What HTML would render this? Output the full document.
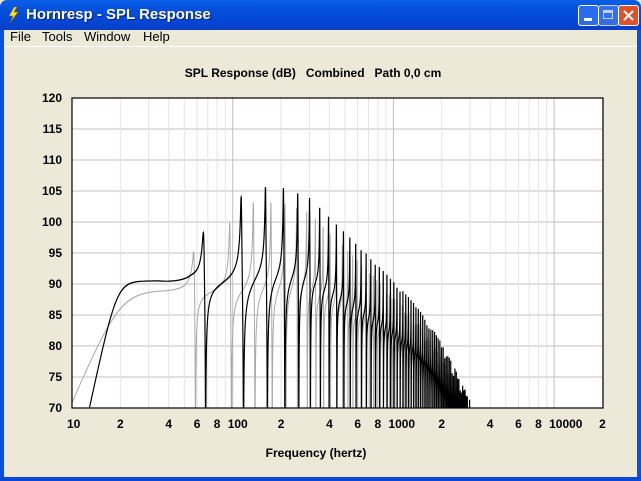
<!DOCTYPE html>
<html><head><meta charset="utf-8"><style>
html,body{margin:0;padding:0;width:641px;height:481px;overflow:hidden;background:#ece9d8;font-family:"Liberation Sans",sans-serif}
#tb{position:absolute;left:0;top:0;width:641px;height:30px;background:linear-gradient(#0a5fe8,#0550dc 30%,#0346d6 70%,#0a3fc4);border-radius:7px 7px 0 0}
#tt{position:absolute;left:26px;top:6px;color:#fff;font-weight:bold;font-size:15px;text-shadow:1px 1px #0a1e7a}
#menu{position:absolute;left:4px;top:30px;width:633px;height:17px;font-size:13px;color:#000}
#menu span{position:absolute;top:-1px}
#lb{position:absolute;left:0;top:30px;width:4px;height:451px;background:#0850e0}
#rb{position:absolute;right:0;top:30px;width:4px;height:451px;background:#0850e0}
#bb{position:absolute;left:0;top:477px;width:641px;height:4px;background:#0847d8}
.btn{position:absolute;top:5px;width:21px;height:21px;border:1px solid #fff;border-radius:3px;box-sizing:border-box}
</style></head><body>
<div id="tb">
<svg style="position:absolute;left:6px;top:6px" width="14" height="18"><path d="M8 1 L3 10 L7 10 L4 17 L12 6 L8 6 L11 1Z" fill="#f5e02a" stroke="#8a6a00" stroke-width="0.6"/></svg>
<div id="tt">Hornresp - SPL Response</div>
<div class="btn" style="left:578px;background:#2a6cf0"><div style="position:absolute;left:5px;top:12px;width:8px;height:3px;background:#fff"></div></div>
<div class="btn" style="left:598px;background:#4a7ae8;opacity:.75"><div style="position:absolute;left:4px;top:4px;width:10px;height:9px;border:1px solid #fff;border-top-width:3px;box-sizing:border-box"></div></div>
<div class="btn" style="left:618px;background:#e0502a"><svg width="19" height="19" style="position:absolute;left:0;top:0"><path d="M5 5 L14 14 M14 5 L5 14" stroke="#fff" stroke-width="2"/></svg></div>
</div>
<div id="lb"></div><div id="rb"></div><div id="bb"></div>
<div id="menu"><span style="left:6px">File</span><span style="left:38px">Tools</span><span style="left:80px">Window</span><span style="left:139px">Help</span></div>
<div style="position:absolute;left:4px;top:46px;width:633px;height:1px;background:#fff"></div>
<svg id="plot" width="641" height="481" style="position:absolute;left:0;top:0" font-family="Liberation Sans, sans-serif">
<defs><clipPath id="cp"><rect x="72" y="98" width="531" height="310"/></clipPath></defs>
<rect x="72" y="98" width="531" height="310" fill="#fff"/>
<g id="grid"></g>
<g clip-path="url(#cp)"><path id="gray" fill="none" stroke="#a8a8a8" stroke-width="1"/><path id="blk" fill="none" stroke="#000" stroke-width="1.2"/></g>
<rect x="72" y="98" width="531" height="310" fill="none" stroke="#000" stroke-width="1.2"/>
<g id="lab" font-size="12" font-weight="bold" fill="#000"></g>
<text x="313" y="77" font-size="12" font-weight="bold" text-anchor="middle" xml:space="preserve">SPL Response (dB)   Combined   Path 0,0 cm</text>
<text x="316" y="457" font-size="12" font-weight="bold" text-anchor="middle">Frequency (hertz)</text>
</svg>
<script>
var X0=72,D=160.7;
function fx(f){return X0+D*Math.log10(f/10);}
function dy(v){return 408-(v-70)*6.2;}
var g=document.getElementById('grid'),lab=document.getElementById('lab'),s='';
for(var v=75;v<120;v+=5)s+='<line x1="72" x2="603" y1="'+dy(v)+'" y2="'+dy(v)+'" stroke="#c0c0c0"/>';
var ls='';
for(var v=70;v<=120;v+=5)ls+='<text x="62" y="'+(dy(v)+4)+'" text-anchor="end">'+v+'</text>';
[10,100,1000,10000].forEach(function(d){for(var m=1;m<10;m++){var f=d*m;var x=fx(f);if(x>604)break;
 if(m>1||d>10)s+='<line x1="'+x+'" x2="'+x+'" y1="98" y2="408" stroke="'+(m==1?'#c0c0c0':'#e4e4e4')+'"/>';
 if(m==1)ls+='<text x="'+(x-5)+'" y="428">'+d+'</text>';
 else if(m%2==0)ls+='<text x="'+x+'" y="428" text-anchor="middle">'+m+'</text>';}});
g.innerHTML=s;lab.innerHTML=ls;
function lg(f){return Math.log10(f);}
function mid(f,plat){var v=plat;if(f>=300)v=plat-16*(lg(f)-lg(300));var q=Math.pow(f/1800,4);return v-10*lg(1+q);}
function ydb(f){if(f<60)return 6;if(f<130)return 6+9*(lg(f)-lg(60))/(lg(130)-lg(60));if(f<200)return 15;if(f<1000)return 15-7*(lg(f)-lg(200))/(lg(1000)-lg(200));return 8-3*(lg(f)-lg(1000))/(lg(3000)-lg(1000));}
function curve(order,fc,plat,p,off,R,yadj){var pts=[];
 for(var x=72;x<=603;x+=0.05){var f=10*Math.pow(10,(x-X0)/D);var r=Math.pow(f/fc,2*order);
  var base=mid(f,plat)+10*Math.log10(r/(1+r));
  var th=2*Math.PI*(f-off)/p;
  var ar=1-R*Math.cos(th),ai=-R*Math.sin(th),den=ar*ar+ai*ai;
  var tr=ar/den-1/(1+R),ti=-ai/den;
  var Y=Math.pow(10,(ydb(f)+yadj)/20);
  var k=(1-R*R)/(2*R);
  var dr=-1*k,di=Y*k;
  var hr=1+dr*tr-di*ti,hi=dr*ti+di*tr;
  var m=Math.min(1,Math.max(0,(f-35)/20));
  var v=base+m*10*Math.log10(hr*hr+hi*hi+1e-9);if(v<60)v=60;
  pts.push((pts.length?'L':'M')+x.toFixed(2)+' '+dy(v).toFixed(1));}
 return pts.join('');}
document.getElementById('blk').setAttribute('d',curve(6,19,90.5,47,19,0.9,0));
document.getElementById('gray').setAttribute('d',curve(3,20,89,38.5,19,0.9,-1));
</script>
</body></html>
